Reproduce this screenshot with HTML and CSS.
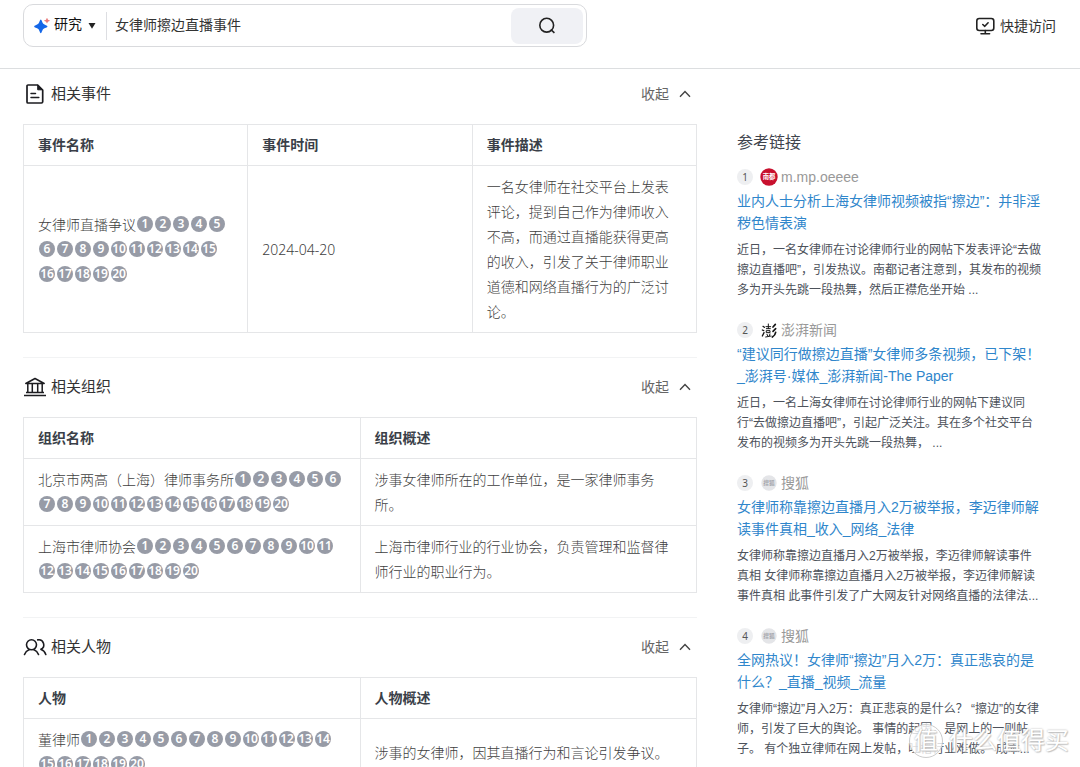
FILE: index.html
```html
<!DOCTYPE html>
<html lang="zh-CN">
<head>
<meta charset="utf-8">
<meta name="viewport" content="width=device-width, initial-scale=1">
<title>女律师擦边直播事件</title>
<link rel="stylesheet" href="styles.css">
</head>
<body>
<div class="app">
  <header class="topbar">
    <form class="search" role="search">
      <svg class="spark" width="16" height="16" viewBox="0 0 16 16" aria-hidden="true"><path fill="#1467e8" d="M6.800 1.600c.9 0 1.200 2.800 2.500 4.100s4.200 1.700 4.200 2.700-2.900 1.400-4.200 2.700-1.600 4.200-2.500 4.200-1.200-2.900-2.500-4.200S.1 9.400.1 8.400s2.900-1.400 4.200-2.700 1.600-4.100 2.500-4.100z"/><path fill="#e87878" d="M13 0c.5 0 .6 1.400 1 1.800s1.800.4 1.800.9-1.400.5-1.800.9-.5 1.800-1 1.800-.6-1.400-1-1.800-1.800-.4-1.800-.9 1.400-.5 1.800-.9.500-1.800 1-1.800z"/></svg>
      <label class="mode">
        <select class="mode-select" aria-label="搜索模式"><option>研究</option></select>
        <svg class="mode-arrow" width="8" height="6" viewBox="0 0 8 6" aria-hidden="true"><path d="M.5 0h7L4 5.800z" fill="#222"/></svg>
      </label>
      <input class="query" type="text" aria-label="搜索内容" value="女律师擦边直播事件">
      <button class="search-btn" type="button" aria-label="搜索">
        <svg width="18" height="18" viewBox="0 0 18 18" fill="none" stroke="#222" stroke-width="1.600" aria-hidden="true"><circle cx="8.700" cy="8.200" r="6.900"/><path d="M12.800 12.500l3.600 3.400"/></svg>
      </button>
    </form>
    <a class="quick" href="#">
      <svg width="20" height="18" viewBox="0 0 20 18" fill="none" stroke="#222" stroke-width="1.600" stroke-linecap="round" stroke-linejoin="round" aria-hidden="true"><rect x="1.800" y="1.500" width="17" height="12" rx="2.500"/><path d="M10.300 13.500v3M6 16.700h8.600M7.800 7.500l2 1.800 3.300-3.500"/></svg>
      快捷访问
    </a>
  </header>

  <div class="content">
    <main class="results">
      <section class="section">
        <div class="section-head">
          <h2 class="section-title">
            <svg class="icon" width="24" height="22" viewBox="0 0 24 22" fill="none" stroke="#1c1c20" stroke-width="1.700" stroke-linejoin="round" aria-hidden="true"><path d="M5 2h9.700l5 5v11.700a1.300 1.300 0 0 1-1.300 1.300H5a1 1 0 0 1-1-1V3a1 1 0 0 1 1-1z"/><path d="M14.700 2v4.800h5z" fill="#1c1c20" stroke-width="1"/><path d="M8 10.500h4.500M8 14.500h7.800" stroke-linecap="round" stroke-width="1.500"/></svg>
            相关事件
          </h2>
          <button class="fold" type="button">收起 <svg width="12" height="8" viewBox="0 0 12 8" fill="none" stroke="#444" stroke-width="1.400" aria-hidden="true"><path d="M1 6.800L6 1.600l5 5.200"/></svg></button>
        </div>
        <table class="grid">
          <thead><tr><th>事件名称</th><th>事件时间</th><th>事件描述</th></tr></thead>
          <tbody>
            <tr>
              <td>女律师直播争议<a class="cite" href="#r1">1</a><a class="cite" href="#r2">2</a><a class="cite" href="#r3">3</a><a class="cite" href="#r4">4</a><a class="cite" href="#">5</a><a class="cite" href="#">6</a><a class="cite" href="#">7</a><a class="cite" href="#">8</a><a class="cite" href="#">9</a><a class="cite" href="#">10</a><a class="cite" href="#">11</a><a class="cite" href="#">12</a><a class="cite" href="#">13</a><a class="cite" href="#">14</a><a class="cite" href="#">15</a><a class="cite" href="#">16</a><a class="cite" href="#">17</a><a class="cite" href="#">18</a><a class="cite" href="#">19</a><a class="cite" href="#">20</a></td>
              <td>2024-04-20</td>
              <td>一名女律师在社交平台上发表评论，提到自己作为律师收入不高，而通过直播能获得更高的收入，引发了关于律师职业道德和网络直播行为的广泛讨论。</td>
            </tr>
          </tbody>
        </table>
      </section>

      <section class="section">
        <div class="section-head">
          <h2 class="section-title">
            <svg class="icon" width="24" height="22" viewBox="0 0 24 22" fill="none" stroke="#1c1c20" stroke-width="1.500" stroke-linejoin="round" aria-hidden="true"><path d="M2.800 7.500L12 2.500l9.200 5z"/><path d="M4.800 8v8.500M9.300 8v8.500M14.700 8v8.500M19.200 8v8.500M3 16.600h18M1 19.600h22"/></svg>
            相关组织
          </h2>
          <button class="fold" type="button">收起 <svg width="12" height="8" viewBox="0 0 12 8" fill="none" stroke="#444" stroke-width="1.400" aria-hidden="true"><path d="M1 6.800L6 1.600l5 5.200"/></svg></button>
        </div>
        <table class="grid">
          <thead><tr><th>组织名称</th><th>组织概述</th></tr></thead>
          <tbody>
            <tr>
              <td>北京市两高（上海）律师事务所<a class="cite" href="#r1">1</a><a class="cite" href="#r2">2</a><a class="cite" href="#r3">3</a><a class="cite" href="#r4">4</a><a class="cite" href="#">5</a><a class="cite" href="#">6</a><a class="cite" href="#">7</a><a class="cite" href="#">8</a><a class="cite" href="#">9</a><a class="cite" href="#">10</a><a class="cite" href="#">11</a><a class="cite" href="#">12</a><a class="cite" href="#">13</a><a class="cite" href="#">14</a><a class="cite" href="#">15</a><a class="cite" href="#">16</a><a class="cite" href="#">17</a><a class="cite" href="#">18</a><a class="cite" href="#">19</a><a class="cite" href="#">20</a></td>
              <td>涉事女律师所在的工作单位，是一家律师事务所。</td>
            </tr>
            <tr>
              <td>上海市律师协会<a class="cite" href="#r1">1</a><a class="cite" href="#r2">2</a><a class="cite" href="#r3">3</a><a class="cite" href="#r4">4</a><a class="cite" href="#">5</a><a class="cite" href="#">6</a><a class="cite" href="#">7</a><a class="cite" href="#">8</a><a class="cite" href="#">9</a><a class="cite" href="#">10</a><a class="cite" href="#">11</a><a class="cite" href="#">12</a><a class="cite" href="#">13</a><a class="cite" href="#">14</a><a class="cite" href="#">15</a><a class="cite" href="#">16</a><a class="cite" href="#">17</a><a class="cite" href="#">18</a><a class="cite" href="#">19</a><a class="cite" href="#">20</a></td>
              <td>上海市律师行业的行业协会，负责管理和监督律师行业的职业行为。</td>
            </tr>
          </tbody>
        </table>
      </section>

      <section class="section">
        <div class="section-head">
          <h2 class="section-title">
            <svg class="icon" width="24" height="22" viewBox="0 0 24 22" fill="none" stroke="#1c1c20" stroke-width="1.600" stroke-linecap="round" aria-hidden="true"><circle cx="8.500" cy="8.800" r="5"/><path d="M1.500 18.500c1-2.600 2.600-4 4.500-4.700M15.500 18.500c-1-2.600-2.600-4-4.500-4.700M14.700 3.900a5 5 0 0 1 3.200 9.400M18.100 13.600c2.200.7 3.800 2.300 4.700 4.900"/></svg>
            相关人物
          </h2>
          <button class="fold" type="button">收起 <svg width="12" height="8" viewBox="0 0 12 8" fill="none" stroke="#444" stroke-width="1.400" aria-hidden="true"><path d="M1 6.800L6 1.600l5 5.200"/></svg></button>
        </div>
        <table class="grid">
          <thead><tr><th>人物</th><th>人物概述</th></tr></thead>
          <tbody>
            <tr>
              <td>董律师<a class="cite" href="#r1">1</a><a class="cite" href="#r2">2</a><a class="cite" href="#r3">3</a><a class="cite" href="#r4">4</a><a class="cite" href="#">5</a><a class="cite" href="#">6</a><a class="cite" href="#">7</a><a class="cite" href="#">8</a><a class="cite" href="#">9</a><a class="cite" href="#">10</a><a class="cite" href="#">11</a><a class="cite" href="#">12</a><a class="cite" href="#">13</a><a class="cite" href="#">14</a><a class="cite" href="#">15</a><a class="cite" href="#">16</a><a class="cite" href="#">17</a><a class="cite" href="#">18</a><a class="cite" href="#">19</a><a class="cite" href="#">20</a></td>
              <td>涉事的女律师，因其直播行为和言论引发争议。</td>
            </tr>
          </tbody>
        </table>
      </section>
    </main>

    <aside class="refs">
      <h2 class="refs-title">参考链接</h2>
      <article class="ref" id="r1">
        <div class="ref-head"><span class="num">1</span>
          <svg class="favicon" width="18" height="18" viewBox="0 0 54 54" aria-hidden="true"><circle cx="27" cy="27" r="26" fill="#c8102e"/><text x="27" y="34" text-anchor="middle" font-size="19" font-weight="700" fill="#fff">南都</text></svg>
          <span>m.mp.oeeee</span></div>
        <a class="ref-link" href="#">业内人士分析上海女律师视频被指“擦边”：并非淫秽色情表演</a>
        <p class="ref-text">近日，一名女律师在讨论律师行业的网帖下发表评论“去做擦边直播吧”，引发热议。南都记者注意到，其发布的视频多为开头先跳一段热舞，然后正襟危坐开始 ...</p>
      </article>
      <article class="ref" id="r2">
        <div class="ref-head"><span class="num">2</span>
          <svg class="favicon" width="18" height="18" viewBox="0 0 54 54" aria-hidden="true"><g fill="none" stroke="#151515" stroke-linecap="round"><path stroke-width="4" d="M9 16l4 3M7 27l4 2M7 45l5-10"/><path stroke-width="3" d="M18 17h14M25 9v13M19 23h12M20 29h10v6H20zM21 40l2 4M30 39l-2 5M17 48l16-3"/><path stroke-width="5" d="M46 10l-7 8M47 23l-8 8M47 34c-1 7-5 11-10 14"/></g></svg>
          <span>澎湃新闻</span></div>
        <a class="ref-link" href="#">“建议同行做擦边直播”女律师多条视频，已下架！_澎湃号·媒体_澎湃新闻-The Paper</a>
        <p class="ref-text">近日，一名上海女律师在讨论律师行业的网帖下建议同<span class="keep">行“去</span>做擦边直播吧”，引起广泛关注。其在多个社交平台发布的视频多为开头先跳一段热舞， ...</p>
      </article>
      <article class="ref" id="r3">
        <div class="ref-head"><span class="num">3</span>
          <svg class="favicon" width="18" height="18" viewBox="0 0 54 54" aria-hidden="true"><circle cx="27" cy="27" r="23" fill="#e4e5e8"/><text x="27" y="34" text-anchor="middle" font-size="17" font-weight="700" fill="#a7a9af">搜狐</text></svg>
          <span>搜狐</span></div>
        <a class="ref-link" href="#">女律师称靠擦边直播月入2万被举报，李迈律师解读事件真相_收入_网络_法律</a>
        <p class="ref-text">女律师称靠擦边直播月入2万被举报，李迈律师解读事件真相 女律师称靠擦边直播月入2万被举报，李迈律师解读事件真相 此事件引发了广大网友针对网络直播的法律法...</p>
      </article>
      <article class="ref" id="r4">
        <div class="ref-head"><span class="num">4</span>
          <svg class="favicon" width="18" height="18" viewBox="0 0 54 54" aria-hidden="true"><circle cx="27" cy="27" r="23" fill="#e4e5e8"/><text x="27" y="34" text-anchor="middle" font-size="17" font-weight="700" fill="#a7a9af">搜狐</text></svg>
          <span>搜狐</span></div>
        <a class="ref-link" href="#">全网热议！女律师“擦边”月入2万：真正悲哀的是什么？_直播_视频_流量</a>
        <p class="ref-text">女律师“擦边”月入2万：真正悲哀的是什么？ “擦边”的女律师，引发了巨大的舆论。 事情的起因，是网上的一则帖子。 有个独立律师在网上发帖，吐槽行业难做。 成本...</p>
      </article>
    </aside>
  </div>

  <div class="watermark"><span class="watermark-seal">值</span><span>什么值得买</span></div>
</div>
</body>
</html>
```
FILE: styles.css
```css
* { box-sizing: border-box; }

body {
  margin: 0;
  background: #fff;
  color: #333;
  font-family: "Liberation Sans", "Noto Sans CJK SC", sans-serif;
  font-size: 14px;
  line-height: 20px;
}

a { color: inherit; text-decoration: none; }
button, input, select { font: inherit; color: inherit; border: 0; background: none; padding: 0; margin: 0; }
h2, p { margin: 0; font-weight: 400; }

.app {
  position: relative;
  height: 100vh;
  overflow: hidden;
}

.topbar {
  display: flex;
  align-items: center;
  justify-content: space-between;
  gap: 24px;
  padding: 4px 24px 21px 23px;
  border-bottom: 1px solid #dcdee0;
}

.search {
  display: flex;
  align-items: center;
  flex: 0 1 564px;
  height: 43px;
  padding: 0 3px 0 10px;
  border: 1px solid #d9dadd;
  border-radius: 10px;
}

.spark { flex: none; margin-right: 4px; }

.mode {
  display: flex;
  align-items: center;
  gap: 6px;
  height: 28px;
  padding-right: 10px;
  border-right: 1px solid #dddee2;
  color: #111;
}

.mode-select {
  appearance: none;
  width: 28px;
  height: 24px;
  padding-bottom: 4px;
  outline: none;
}

.query {
  flex: 1;
  min-width: 0;
  height: 36px;
  padding: 0 8px 4px;
  outline: none;
}

.search-btn {
  display: grid;
  place-items: center;
  width: 72px;
  height: 36px;
  border-radius: 8px;
  background: #f0f1f5;
}

.quick {
  display: flex;
  align-items: center;
  gap: 5px;
}

.content {
  display: grid;
  grid-template-columns: minmax(0, 1fr) 308px;
  gap: 40px;
  padding: 0 35px 0 23px;
}

.section + .section {
  margin-top: 24px;
  border-top: 1px solid #f2f3f4;
}

.section-head {
  display: flex;
  align-items: center;
  justify-content: space-between;
  padding: 14px 6px 15px 0;
}

.section:first-child .section-head { padding-top: 10px; }

.section-title {
  display: flex;
  align-items: center;
  gap: 4px;
  font-size: 15px;
  line-height: 30px;
}

.fold {
  display: flex;
  align-items: center;
  gap: 10px;
  color: #666;
}

.grid {
  width: 100%;
  table-layout: fixed;
  border-collapse: collapse;
  font-family: "Noto Sans", "Noto Sans CJK SC", sans-serif;
  color: #404040;
}

.grid th,
.grid td {
  padding: 8px 16px 8px 14px;
  border: 1px solid #e5e6e8;
  text-align: left;
  vertical-align: middle;
}

.grid th {
  color: #3a3f48;
  font-weight: 700;
  line-height: 24px;
}

.grid td {
  font-weight: 300;
  line-height: 25px;
}

.cite {
  display: inline-block;
  width: 16px;
  height: 16px;
  margin: 0 1px;
  border-radius: 50%;
  background: #979ba6;
  color: #fff;
  font-size: 12px;
  font-weight: 600;
  line-height: 16px;
  text-align: center;
  vertical-align: top;
  margin-top: 4px;
}

.refs { padding-top: 62px; }

.refs-title {
  margin-bottom: 11px;
  color: #40444d;
  font-size: 16px;
  line-height: 24px;
}

.ref { margin-bottom: 19px; }

.ref-head {
  display: flex;
  align-items: center;
  height: 22px;
  margin-bottom: 2px;
  color: #999;
}

.num {
  width: 16px;
  height: 16px;
  border-radius: 50%;
  background: #eeeff1;
  color: #555;
  font-family: "Noto Sans", sans-serif;
  font-size: 10px;
  line-height: 16px;
  text-align: center;
}

.favicon {
  margin: 0 3px 0 7px;
  font-family: "Noto Sans CJK SC", sans-serif;
}

.ref-link {
  display: block;
  color: #2f86cb;
  line-height: 22px;
}

.ref-text {
  margin-top: 6px;
  padding-right: 3px;
  color: #4d525b;
  font-size: 12px;
  line-height: 20px;
}

.keep { white-space: nowrap; }

.watermark {
  position: absolute;
  right: 11px;
  bottom: 8px;
  display: flex;
  align-items: center;
  gap: 6px;
  color: #fff;
  font-size: 24px;
  line-height: 36px;
  text-shadow: 0 0 2px #aaa, 1px 1px 1px #ccc;
  pointer-events: none;
}

.watermark-seal {
  width: 34px;
  height: 34px;
  border: 1px solid #ccc;
  border-radius: 50%;
  background: rgba(255, 255, 255, 0.8);
  line-height: 31px;
  text-align: center;
}
```
